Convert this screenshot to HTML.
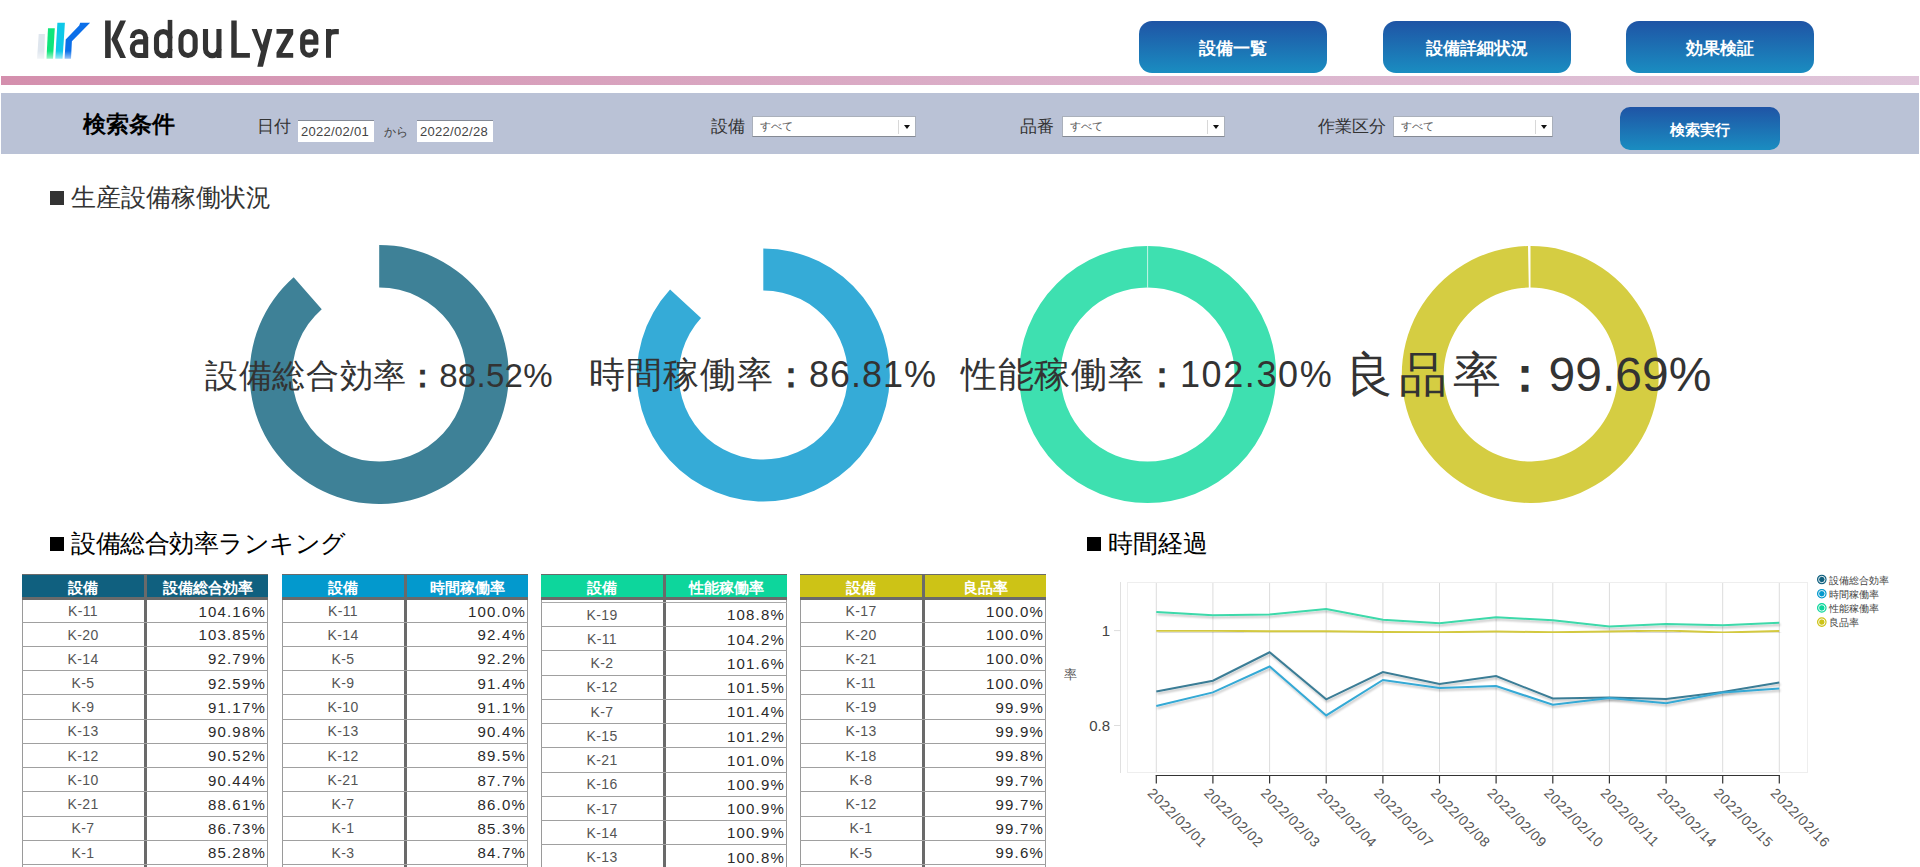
<!DOCTYPE html>
<html><head><meta charset="utf-8"><title>KadouLyzer</title>
<style>
*{box-sizing:border-box;margin:0;padding:0}
html,body{width:1920px;height:867px;overflow:hidden;background:#fff;font-family:"Liberation Sans",sans-serif;}
.a{position:absolute;white-space:nowrap;line-height:1}
.navbtn{position:absolute;top:21px;width:188px;height:52px;border-radius:13px;background:linear-gradient(#1f54a5,#1a8dc1);color:#fff;font-weight:bold;font-size:17px;text-align:center;line-height:56px}
.lbl{position:absolute;font-size:17px;color:#333;line-height:1;white-space:nowrap}
.sel{position:absolute;height:21px;background:#fff;border:1px solid #aab0bb;border-bottom:1.5px solid #858a94}
.sel span{position:absolute;left:7px;top:4.5px;font-size:10.5px;color:#555;line-height:1;letter-spacing:-0.2px}
.sel i{position:absolute;right:16px;top:3px;width:1px;height:14px;background:#d8d8d8}
.sel b{position:absolute;right:5px;top:8px;width:0;height:0;border-left:3.5px solid transparent;border-right:3.5px solid transparent;border-top:4px solid #111}
.date{position:absolute;top:120px;width:76px;height:22px;background:#fff;border-top:1.5px solid #858b97;font-size:13px;color:#444;line-height:1;letter-spacing:0.3px}
.date span{position:absolute;left:3px;top:4px}
.ttl{position:absolute;font-size:25px;line-height:1;white-space:nowrap}
.sq{position:absolute;width:14px;height:14px}
table{position:absolute;border-collapse:collapse;table-layout:fixed}
</style></head><body>

<svg class="a" style="left:0;top:0" width="360" height="75" viewBox="0 0 360 75">
<defs>
<linearGradient id="fadeg" gradientUnits="userSpaceOnUse" x1="0" y1="51" x2="0" y2="59.5"><stop offset="0" stop-color="#fff" stop-opacity="1"/><stop offset="1" stop-color="#fff" stop-opacity="0.35"/></linearGradient>
<mask id="fm" maskUnits="userSpaceOnUse" x="0" y="0" width="100" height="75"><rect x="0" y="0" width="100" height="75" fill="url(#fadeg)"/></mask>
</defs>
<g mask="url(#fm)">
<polygon points="38.7,33.9 44.9,33.9 44.2,58.8 37.1,58.8" fill="#dfe6ee"/>
<polygon points="48,28.2 54.8,28.2 53,58.8 46.5,58.8" fill="#0fe57a"/>
<polygon points="57.4,22.7 64.9,22.7 62.6,58.8 55.3,58.8" fill="#0fc8e8"/>
<polygon points="80.2,22.7 90.1,22.7 71.9,41.2 71,58.8 64.6,58.8 65.7,39.6 79.2,25.6" fill="#0b6fe9"/>
</g>
<g fill="#333">
<rect x="105.1" y="20.5" width="5.6" height="37.5"/>
<polygon points="120.2,20.5 126,20.5 117.4,39.3 126,58 120.2,58 111.2,39.3"/>
<rect x="143.1" y="37" width="5.1" height="21"/>
<polygon points="231.3,20.4 236.7,20.4 236.7,53 249.9,53 249.9,57.8 231.3,57.8"/>
<polygon points="251.6,29 256.9,29 262.3,45 267.2,29 272.4,29 263,66.7 257.3,66.7 260.9,51.5"/>
<polygon points="276.5,29 293.2,29 293.2,34.2 282.3,53 293.2,53 293.2,57.8 276.5,57.8 276.5,52.6 287.4,33.8 276.5,33.8"/>
<rect x="326" y="29" width="5" height="28.8"/>
<rect x="167.7" y="19.9" width="4.6" height="38.1"/>
</g>
<g fill="none" stroke="#333" stroke-width="5.1" stroke-linecap="butt" stroke-linejoin="miter">
<path d="M132.4,37.8 V38.1 A6.6,6.6 0 0 1 145.65,38.1"/>
<path d="M145.65,41.9 H138.4 A6,6.3 0 0 0 132.4,48.2 V49.3 A6,6.3 0 0 0 138.4,55.5 H145.65"/>
<path d="M170,38.35 A6.75,6.75 0 0 0 156.5,38.35 V48.9 A6.75,6.75 0 0 0 170,48.9"/>
<rect x="180.95" y="31.55" width="14.2" height="23.9" rx="7.1"/>
<path d="M205.5,29 V48.9 A6.72,6.72 0 0 0 218.95,48.9"/>
<path d="M218.95,29 V58"/>
<path d="M315.85,49.2 V48.6 A6.6,6.6 0 0 1 302.65,48.6 V38.2 A6.6,6.6 0 0 1 315.85,38.2 V42.1 H302.65"/>
<path d="M328.5,39 C328.5,33 331,31.6 335,31.6 H338.8"/>
</g>
</svg>

<div class="a" style="left:1px;top:76px;width:1918px;height:9px;background:linear-gradient(90deg,#d48fad,#dcb3cc 60%,#dfc5da)"></div>
<div class="navbtn" style="left:1139px">設備一覧</div>
<div class="navbtn" style="left:1383px">設備詳細状況</div>
<div class="navbtn" style="left:1626px">効果検証</div>
<div class="a" style="left:1px;top:93px;width:1918px;height:61px;background:#bac2d6"></div>
<div class="a" style="left:83px;top:112.5px;font-size:23px;font-weight:bold;color:#000">検索条件</div>
<div class="lbl" style="left:257px;top:118px">日付</div>
<div class="date" style="left:298px"><span>2022/02/01</span></div>
<div class="a" style="left:384px;top:126px;font-size:12px;color:#444">から</div>
<div class="date" style="left:417px"><span>2022/02/28</span></div>
<div class="lbl" style="left:711px;top:118px">設備</div>
<div class="sel" style="left:752px;top:115.5px;width:164px"><span>すべて</span><i></i><b></b></div>
<div class="lbl" style="left:1020px;top:118px">品番</div>
<div class="sel" style="left:1062px;top:115.5px;width:163px"><span>すべて</span><i></i><b></b></div>
<div class="lbl" style="left:1318px;top:118px">作業区分</div>
<div class="sel" style="left:1393px;top:115.5px;width:160px"><span>すべて</span><i></i><b></b></div>
<div class="navbtn" style="left:1620px;top:107px;width:160px;height:43px;line-height:45px;font-size:15px;border-radius:10px">検索実行</div>
<div class="sq" style="left:50px;top:191px;background:#333"></div>
<div class="ttl" style="left:71px;top:185px;color:#333">生産設備稼働状況</div>
<svg class="a" style="left:0;top:230px" width="1920" height="290" viewBox="0 230 1920 290">
<path d="M379.20,245.00 A129.5,129.5 0 1 1 293.68,277.25 L321.75,309.17 A87,87 0 1 0 379.20,287.50 Z" fill="#3e8197"/>
<path d="M763.30,248.50 A126.5,126.5 0 1 1 670.06,289.51 L701.02,317.90 A84.5,84.5 0 1 0 763.30,290.50 Z" fill="#35abd7"/>
<circle cx="1147.6" cy="374.5" r="107.75" fill="none" stroke="#3ee0b0" stroke-width="41.5"/>
<line x1="1147.6" y1="246.0" x2="1147.6" y2="287.5" stroke="#fff" stroke-width="1" opacity="0.7"/>
<path d="M1530.50,246.00 A128.5,128.5 0 1 1 1528.00,246.02 L1528.81,287.52 A87,87 0 1 0 1530.50,287.50 Z" fill="#d5cd42"/>
</svg>
<div class="a" style="left:379px;top:374.5px;transform:translate(-50%,-50%);font-size:33px;color:#333;line-height:1"><span style="letter-spacing:0.6px;margin-right:-0.6px">設備総合効率</span><b style="font-weight:bold">：</b><span style="letter-spacing:0.3px">88.52%</span></div>
<div class="a" style="left:763px;top:374.5px;transform:translate(-50%,-50%);font-size:36px;color:#333;line-height:1"><span style="letter-spacing:1.0px;margin-right:-1.0px">時間稼働率</span><b style="font-weight:bold">：</b><span style="letter-spacing:1.0px">86.81%</span></div>
<div class="a" style="left:1147px;top:374.5px;transform:translate(-50%,-50%);font-size:36px;color:#333;line-height:1"><span style="letter-spacing:0.8px;margin-right:-0.8px">性能稼働率</span><b style="font-weight:bold">：</b><span style="letter-spacing:1.6px">102.30%</span></div>
<div class="a" style="left:1528px;top:374.5px;transform:translate(-50%,-50%);font-size:48px;color:#333;line-height:1"><span style="letter-spacing:6px;margin-right:-6px">良品率</span><b style="font-weight:bold">：</b><span style="letter-spacing:0px">99.69%</span></div>
<div class="sq" style="left:50px;top:537px;background:#000"></div>
<div class="ttl" style="left:71px;top:531px;color:#000;letter-spacing:-0.5px">設備総合効率ランキング</div>
<div class="sq" style="left:1087px;top:537px;background:#000"></div>
<div class="ttl" style="left:1108px;top:531px;color:#000">時間経過</div>
<div class="a" style="left:22px;top:574px;width:246px;height:26px;background:#10607f;border-top:1px solid #6a6a6a;border-bottom:3px solid #6a6a6a"></div>
<div class="a" style="left:22px;top:580px;width:122px;text-align:center;font-size:15px;font-weight:bold;color:#fff">設備</div>
<div class="a" style="left:147px;top:580px;width:121px;text-align:center;font-size:15px;font-weight:bold;color:#fff">設備総合効率</div>
<div class="a" style="left:22px;top:600px;width:1px;height:267px;background:#9a9a9a"></div>
<div class="a" style="left:267px;top:600px;width:1px;height:267px;background:#9a9a9a"></div>
<div class="a" style="left:144px;top:575px;width:3px;height:292px;background:#6a6a6a"></div>
<div class="a" style="left:22px;top:622px;width:246px;height:1px;background:#a0a0a0"></div>
<div class="a" style="left:22px;top:604.35px;width:122px;text-align:center;font-size:14px;color:#555;letter-spacing:0.4px">K-11</div>
<div class="a" style="left:147px;top:603.95px;width:119px;text-align:right;font-size:15px;color:#2a2a2a;letter-spacing:1.2px">104.16%</div>
<div class="a" style="left:22px;top:646px;width:246px;height:1px;background:#a0a0a0"></div>
<div class="a" style="left:22px;top:627.61px;width:122px;text-align:center;font-size:14px;color:#555;letter-spacing:0.4px">K-20</div>
<div class="a" style="left:147px;top:627.21px;width:119px;text-align:right;font-size:15px;color:#2a2a2a;letter-spacing:1.2px">103.85%</div>
<div class="a" style="left:22px;top:670px;width:246px;height:1px;background:#a0a0a0"></div>
<div class="a" style="left:22px;top:651.83px;width:122px;text-align:center;font-size:14px;color:#555;letter-spacing:0.4px">K-14</div>
<div class="a" style="left:147px;top:651.43px;width:119px;text-align:right;font-size:15px;color:#2a2a2a;letter-spacing:1.2px">92.79%</div>
<div class="a" style="left:22px;top:694px;width:246px;height:1px;background:#a0a0a0"></div>
<div class="a" style="left:22px;top:676.05px;width:122px;text-align:center;font-size:14px;color:#555;letter-spacing:0.4px">K-5</div>
<div class="a" style="left:147px;top:675.65px;width:119px;text-align:right;font-size:15px;color:#2a2a2a;letter-spacing:1.2px">92.59%</div>
<div class="a" style="left:22px;top:719px;width:246px;height:1px;background:#a0a0a0"></div>
<div class="a" style="left:22px;top:700.27px;width:122px;text-align:center;font-size:14px;color:#555;letter-spacing:0.4px">K-9</div>
<div class="a" style="left:147px;top:699.87px;width:119px;text-align:right;font-size:15px;color:#2a2a2a;letter-spacing:1.2px">91.17%</div>
<div class="a" style="left:22px;top:743px;width:246px;height:1px;background:#a0a0a0"></div>
<div class="a" style="left:22px;top:724.49px;width:122px;text-align:center;font-size:14px;color:#555;letter-spacing:0.4px">K-13</div>
<div class="a" style="left:147px;top:724.09px;width:119px;text-align:right;font-size:15px;color:#2a2a2a;letter-spacing:1.2px">90.98%</div>
<div class="a" style="left:22px;top:767px;width:246px;height:1px;background:#a0a0a0"></div>
<div class="a" style="left:22px;top:748.71px;width:122px;text-align:center;font-size:14px;color:#555;letter-spacing:0.4px">K-12</div>
<div class="a" style="left:147px;top:748.31px;width:119px;text-align:right;font-size:15px;color:#2a2a2a;letter-spacing:1.2px">90.52%</div>
<div class="a" style="left:22px;top:791px;width:246px;height:1px;background:#a0a0a0"></div>
<div class="a" style="left:22px;top:772.93px;width:122px;text-align:center;font-size:14px;color:#555;letter-spacing:0.4px">K-10</div>
<div class="a" style="left:147px;top:772.53px;width:119px;text-align:right;font-size:15px;color:#2a2a2a;letter-spacing:1.2px">90.44%</div>
<div class="a" style="left:22px;top:816px;width:246px;height:1px;background:#a0a0a0"></div>
<div class="a" style="left:22px;top:797.15px;width:122px;text-align:center;font-size:14px;color:#555;letter-spacing:0.4px">K-21</div>
<div class="a" style="left:147px;top:796.75px;width:119px;text-align:right;font-size:15px;color:#2a2a2a;letter-spacing:1.2px">88.61%</div>
<div class="a" style="left:22px;top:840px;width:246px;height:1px;background:#a0a0a0"></div>
<div class="a" style="left:22px;top:821.37px;width:122px;text-align:center;font-size:14px;color:#555;letter-spacing:0.4px">K-7</div>
<div class="a" style="left:147px;top:820.97px;width:119px;text-align:right;font-size:15px;color:#2a2a2a;letter-spacing:1.2px">86.73%</div>
<div class="a" style="left:22px;top:864px;width:246px;height:1px;background:#a0a0a0"></div>
<div class="a" style="left:22px;top:845.59px;width:122px;text-align:center;font-size:14px;color:#555;letter-spacing:0.4px">K-1</div>
<div class="a" style="left:147px;top:845.19px;width:119px;text-align:right;font-size:15px;color:#2a2a2a;letter-spacing:1.2px">85.28%</div>
<div class="a" style="left:282px;top:574px;width:246px;height:26px;background:#0399cd;border-top:1px solid #6a6a6a;border-bottom:3px solid #6a6a6a"></div>
<div class="a" style="left:282px;top:580px;width:122px;text-align:center;font-size:15px;font-weight:bold;color:#fff">設備</div>
<div class="a" style="left:407px;top:580px;width:121px;text-align:center;font-size:15px;font-weight:bold;color:#fff">時間稼働率</div>
<div class="a" style="left:282px;top:600px;width:1px;height:267px;background:#9a9a9a"></div>
<div class="a" style="left:527px;top:600px;width:1px;height:267px;background:#9a9a9a"></div>
<div class="a" style="left:404px;top:575px;width:3px;height:292px;background:#6a6a6a"></div>
<div class="a" style="left:282px;top:622px;width:246px;height:1px;background:#a0a0a0"></div>
<div class="a" style="left:282px;top:604.35px;width:122px;text-align:center;font-size:14px;color:#555;letter-spacing:0.4px">K-11</div>
<div class="a" style="left:407px;top:603.95px;width:119px;text-align:right;font-size:15px;color:#2a2a2a;letter-spacing:1.2px">100.0%</div>
<div class="a" style="left:282px;top:646px;width:246px;height:1px;background:#a0a0a0"></div>
<div class="a" style="left:282px;top:627.61px;width:122px;text-align:center;font-size:14px;color:#555;letter-spacing:0.4px">K-14</div>
<div class="a" style="left:407px;top:627.21px;width:119px;text-align:right;font-size:15px;color:#2a2a2a;letter-spacing:1.2px">92.4%</div>
<div class="a" style="left:282px;top:670px;width:246px;height:1px;background:#a0a0a0"></div>
<div class="a" style="left:282px;top:651.83px;width:122px;text-align:center;font-size:14px;color:#555;letter-spacing:0.4px">K-5</div>
<div class="a" style="left:407px;top:651.43px;width:119px;text-align:right;font-size:15px;color:#2a2a2a;letter-spacing:1.2px">92.2%</div>
<div class="a" style="left:282px;top:694px;width:246px;height:1px;background:#a0a0a0"></div>
<div class="a" style="left:282px;top:676.05px;width:122px;text-align:center;font-size:14px;color:#555;letter-spacing:0.4px">K-9</div>
<div class="a" style="left:407px;top:675.65px;width:119px;text-align:right;font-size:15px;color:#2a2a2a;letter-spacing:1.2px">91.4%</div>
<div class="a" style="left:282px;top:719px;width:246px;height:1px;background:#a0a0a0"></div>
<div class="a" style="left:282px;top:700.27px;width:122px;text-align:center;font-size:14px;color:#555;letter-spacing:0.4px">K-10</div>
<div class="a" style="left:407px;top:699.87px;width:119px;text-align:right;font-size:15px;color:#2a2a2a;letter-spacing:1.2px">91.1%</div>
<div class="a" style="left:282px;top:743px;width:246px;height:1px;background:#a0a0a0"></div>
<div class="a" style="left:282px;top:724.49px;width:122px;text-align:center;font-size:14px;color:#555;letter-spacing:0.4px">K-13</div>
<div class="a" style="left:407px;top:724.09px;width:119px;text-align:right;font-size:15px;color:#2a2a2a;letter-spacing:1.2px">90.4%</div>
<div class="a" style="left:282px;top:767px;width:246px;height:1px;background:#a0a0a0"></div>
<div class="a" style="left:282px;top:748.71px;width:122px;text-align:center;font-size:14px;color:#555;letter-spacing:0.4px">K-12</div>
<div class="a" style="left:407px;top:748.31px;width:119px;text-align:right;font-size:15px;color:#2a2a2a;letter-spacing:1.2px">89.5%</div>
<div class="a" style="left:282px;top:791px;width:246px;height:1px;background:#a0a0a0"></div>
<div class="a" style="left:282px;top:772.93px;width:122px;text-align:center;font-size:14px;color:#555;letter-spacing:0.4px">K-21</div>
<div class="a" style="left:407px;top:772.53px;width:119px;text-align:right;font-size:15px;color:#2a2a2a;letter-spacing:1.2px">87.7%</div>
<div class="a" style="left:282px;top:816px;width:246px;height:1px;background:#a0a0a0"></div>
<div class="a" style="left:282px;top:797.15px;width:122px;text-align:center;font-size:14px;color:#555;letter-spacing:0.4px">K-7</div>
<div class="a" style="left:407px;top:796.75px;width:119px;text-align:right;font-size:15px;color:#2a2a2a;letter-spacing:1.2px">86.0%</div>
<div class="a" style="left:282px;top:840px;width:246px;height:1px;background:#a0a0a0"></div>
<div class="a" style="left:282px;top:821.37px;width:122px;text-align:center;font-size:14px;color:#555;letter-spacing:0.4px">K-1</div>
<div class="a" style="left:407px;top:820.97px;width:119px;text-align:right;font-size:15px;color:#2a2a2a;letter-spacing:1.2px">85.3%</div>
<div class="a" style="left:282px;top:864px;width:246px;height:1px;background:#a0a0a0"></div>
<div class="a" style="left:282px;top:845.59px;width:122px;text-align:center;font-size:14px;color:#555;letter-spacing:0.4px">K-3</div>
<div class="a" style="left:407px;top:845.19px;width:119px;text-align:right;font-size:15px;color:#2a2a2a;letter-spacing:1.2px">84.7%</div>
<div class="a" style="left:541px;top:574px;width:246px;height:26px;background:#0dd69c;border-top:1px solid #6a6a6a;border-bottom:3px solid #6a6a6a"></div>
<div class="a" style="left:541px;top:580px;width:122px;text-align:center;font-size:15px;font-weight:bold;color:#fff">設備</div>
<div class="a" style="left:666px;top:580px;width:121px;text-align:center;font-size:15px;font-weight:bold;color:#fff">性能稼働率</div>
<div class="a" style="left:541px;top:600px;width:1px;height:267px;background:#9a9a9a"></div>
<div class="a" style="left:786px;top:600px;width:1px;height:267px;background:#9a9a9a"></div>
<div class="a" style="left:663px;top:575px;width:3px;height:292px;background:#6a6a6a"></div>
<div class="a" style="left:541px;top:601.5px;width:246px;height:1.5px;background:#aaa"></div>
<div class="a" style="left:541px;top:626px;width:246px;height:1px;background:#a0a0a0"></div>
<div class="a" style="left:541px;top:607.81px;width:122px;text-align:center;font-size:14px;color:#555;letter-spacing:0.4px">K-19</div>
<div class="a" style="left:666px;top:607.41px;width:119px;text-align:right;font-size:15px;color:#2a2a2a;letter-spacing:1.2px">108.8%</div>
<div class="a" style="left:541px;top:650px;width:246px;height:1px;background:#a0a0a0"></div>
<div class="a" style="left:541px;top:632.03px;width:122px;text-align:center;font-size:14px;color:#555;letter-spacing:0.4px">K-11</div>
<div class="a" style="left:666px;top:631.63px;width:119px;text-align:right;font-size:15px;color:#2a2a2a;letter-spacing:1.2px">104.2%</div>
<div class="a" style="left:541px;top:675px;width:246px;height:1px;background:#a0a0a0"></div>
<div class="a" style="left:541px;top:656.25px;width:122px;text-align:center;font-size:14px;color:#555;letter-spacing:0.4px">K-2</div>
<div class="a" style="left:666px;top:655.85px;width:119px;text-align:right;font-size:15px;color:#2a2a2a;letter-spacing:1.2px">101.6%</div>
<div class="a" style="left:541px;top:699px;width:246px;height:1px;background:#a0a0a0"></div>
<div class="a" style="left:541px;top:680.47px;width:122px;text-align:center;font-size:14px;color:#555;letter-spacing:0.4px">K-12</div>
<div class="a" style="left:666px;top:680.07px;width:119px;text-align:right;font-size:15px;color:#2a2a2a;letter-spacing:1.2px">101.5%</div>
<div class="a" style="left:541px;top:723px;width:246px;height:1px;background:#a0a0a0"></div>
<div class="a" style="left:541px;top:704.69px;width:122px;text-align:center;font-size:14px;color:#555;letter-spacing:0.4px">K-7</div>
<div class="a" style="left:666px;top:704.29px;width:119px;text-align:right;font-size:15px;color:#2a2a2a;letter-spacing:1.2px">101.4%</div>
<div class="a" style="left:541px;top:747px;width:246px;height:1px;background:#a0a0a0"></div>
<div class="a" style="left:541px;top:728.91px;width:122px;text-align:center;font-size:14px;color:#555;letter-spacing:0.4px">K-15</div>
<div class="a" style="left:666px;top:728.51px;width:119px;text-align:right;font-size:15px;color:#2a2a2a;letter-spacing:1.2px">101.2%</div>
<div class="a" style="left:541px;top:772px;width:246px;height:1px;background:#a0a0a0"></div>
<div class="a" style="left:541px;top:753.13px;width:122px;text-align:center;font-size:14px;color:#555;letter-spacing:0.4px">K-21</div>
<div class="a" style="left:666px;top:752.73px;width:119px;text-align:right;font-size:15px;color:#2a2a2a;letter-spacing:1.2px">101.0%</div>
<div class="a" style="left:541px;top:796px;width:246px;height:1px;background:#a0a0a0"></div>
<div class="a" style="left:541px;top:777.35px;width:122px;text-align:center;font-size:14px;color:#555;letter-spacing:0.4px">K-16</div>
<div class="a" style="left:666px;top:776.95px;width:119px;text-align:right;font-size:15px;color:#2a2a2a;letter-spacing:1.2px">100.9%</div>
<div class="a" style="left:541px;top:820px;width:246px;height:1px;background:#a0a0a0"></div>
<div class="a" style="left:541px;top:801.57px;width:122px;text-align:center;font-size:14px;color:#555;letter-spacing:0.4px">K-17</div>
<div class="a" style="left:666px;top:801.17px;width:119px;text-align:right;font-size:15px;color:#2a2a2a;letter-spacing:1.2px">100.9%</div>
<div class="a" style="left:541px;top:844px;width:246px;height:1px;background:#a0a0a0"></div>
<div class="a" style="left:541px;top:825.79px;width:122px;text-align:center;font-size:14px;color:#555;letter-spacing:0.4px">K-14</div>
<div class="a" style="left:666px;top:825.39px;width:119px;text-align:right;font-size:15px;color:#2a2a2a;letter-spacing:1.2px">100.9%</div>
<div class="a" style="left:541px;top:868px;width:246px;height:1px;background:#a0a0a0"></div>
<div class="a" style="left:541px;top:850.01px;width:122px;text-align:center;font-size:14px;color:#555;letter-spacing:0.4px">K-13</div>
<div class="a" style="left:666px;top:849.61px;width:119px;text-align:right;font-size:15px;color:#2a2a2a;letter-spacing:1.2px">100.8%</div>
<div class="a" style="left:800px;top:574px;width:246px;height:26px;background:#cdc316;border-top:1px solid #6a6a6a;border-bottom:3px solid #6a6a6a"></div>
<div class="a" style="left:800px;top:580px;width:122px;text-align:center;font-size:15px;font-weight:bold;color:#fff">設備</div>
<div class="a" style="left:925px;top:580px;width:121px;text-align:center;font-size:15px;font-weight:bold;color:#fff">良品率</div>
<div class="a" style="left:800px;top:600px;width:1px;height:267px;background:#9a9a9a"></div>
<div class="a" style="left:1045px;top:600px;width:1px;height:267px;background:#9a9a9a"></div>
<div class="a" style="left:922px;top:575px;width:3px;height:292px;background:#6a6a6a"></div>
<div class="a" style="left:800px;top:622px;width:246px;height:1px;background:#a0a0a0"></div>
<div class="a" style="left:800px;top:604.35px;width:122px;text-align:center;font-size:14px;color:#555;letter-spacing:0.4px">K-17</div>
<div class="a" style="left:925px;top:603.95px;width:119px;text-align:right;font-size:15px;color:#2a2a2a;letter-spacing:1.2px">100.0%</div>
<div class="a" style="left:800px;top:646px;width:246px;height:1px;background:#a0a0a0"></div>
<div class="a" style="left:800px;top:627.61px;width:122px;text-align:center;font-size:14px;color:#555;letter-spacing:0.4px">K-20</div>
<div class="a" style="left:925px;top:627.21px;width:119px;text-align:right;font-size:15px;color:#2a2a2a;letter-spacing:1.2px">100.0%</div>
<div class="a" style="left:800px;top:670px;width:246px;height:1px;background:#a0a0a0"></div>
<div class="a" style="left:800px;top:651.83px;width:122px;text-align:center;font-size:14px;color:#555;letter-spacing:0.4px">K-21</div>
<div class="a" style="left:925px;top:651.43px;width:119px;text-align:right;font-size:15px;color:#2a2a2a;letter-spacing:1.2px">100.0%</div>
<div class="a" style="left:800px;top:694px;width:246px;height:1px;background:#a0a0a0"></div>
<div class="a" style="left:800px;top:676.05px;width:122px;text-align:center;font-size:14px;color:#555;letter-spacing:0.4px">K-11</div>
<div class="a" style="left:925px;top:675.65px;width:119px;text-align:right;font-size:15px;color:#2a2a2a;letter-spacing:1.2px">100.0%</div>
<div class="a" style="left:800px;top:719px;width:246px;height:1px;background:#a0a0a0"></div>
<div class="a" style="left:800px;top:700.27px;width:122px;text-align:center;font-size:14px;color:#555;letter-spacing:0.4px">K-19</div>
<div class="a" style="left:925px;top:699.87px;width:119px;text-align:right;font-size:15px;color:#2a2a2a;letter-spacing:1.2px">99.9%</div>
<div class="a" style="left:800px;top:743px;width:246px;height:1px;background:#a0a0a0"></div>
<div class="a" style="left:800px;top:724.49px;width:122px;text-align:center;font-size:14px;color:#555;letter-spacing:0.4px">K-13</div>
<div class="a" style="left:925px;top:724.09px;width:119px;text-align:right;font-size:15px;color:#2a2a2a;letter-spacing:1.2px">99.9%</div>
<div class="a" style="left:800px;top:767px;width:246px;height:1px;background:#a0a0a0"></div>
<div class="a" style="left:800px;top:748.71px;width:122px;text-align:center;font-size:14px;color:#555;letter-spacing:0.4px">K-18</div>
<div class="a" style="left:925px;top:748.31px;width:119px;text-align:right;font-size:15px;color:#2a2a2a;letter-spacing:1.2px">99.8%</div>
<div class="a" style="left:800px;top:791px;width:246px;height:1px;background:#a0a0a0"></div>
<div class="a" style="left:800px;top:772.93px;width:122px;text-align:center;font-size:14px;color:#555;letter-spacing:0.4px">K-8</div>
<div class="a" style="left:925px;top:772.53px;width:119px;text-align:right;font-size:15px;color:#2a2a2a;letter-spacing:1.2px">99.7%</div>
<div class="a" style="left:800px;top:816px;width:246px;height:1px;background:#a0a0a0"></div>
<div class="a" style="left:800px;top:797.15px;width:122px;text-align:center;font-size:14px;color:#555;letter-spacing:0.4px">K-12</div>
<div class="a" style="left:925px;top:796.75px;width:119px;text-align:right;font-size:15px;color:#2a2a2a;letter-spacing:1.2px">99.7%</div>
<div class="a" style="left:800px;top:840px;width:246px;height:1px;background:#a0a0a0"></div>
<div class="a" style="left:800px;top:821.37px;width:122px;text-align:center;font-size:14px;color:#555;letter-spacing:0.4px">K-1</div>
<div class="a" style="left:925px;top:820.97px;width:119px;text-align:right;font-size:15px;color:#2a2a2a;letter-spacing:1.2px">99.7%</div>
<div class="a" style="left:800px;top:864px;width:246px;height:1px;background:#a0a0a0"></div>
<div class="a" style="left:800px;top:845.59px;width:122px;text-align:center;font-size:14px;color:#555;letter-spacing:0.4px">K-5</div>
<div class="a" style="left:925px;top:845.19px;width:119px;text-align:right;font-size:15px;color:#2a2a2a;letter-spacing:1.2px">99.6%</div>
<svg class="a" style="left:1040px;top:560px" width="880" height="307" viewBox="1040 560 880 307">
<defs><filter id="sh" x="-5%" y="-20%" width="110%" height="140%"><feGaussianBlur in="SourceAlpha" stdDeviation="1"/><feOffset dx="1" dy="2"/><feComponentTransfer><feFuncA type="linear" slope="0.25"/></feComponentTransfer><feMerge><feMergeNode/><feMergeNode in="SourceGraphic"/></feMerge></filter></defs>
<rect x="1127.5" y="582.5" width="680" height="190" fill="none" stroke="#eeeeee" stroke-width="1"/>
<line x1="1120.5" y1="582" x2="1120.5" y2="773" stroke="#e0e0e0" stroke-width="1"/>
<line x1="1114" y1="630.6" x2="1121" y2="630.6" stroke="#ddd" stroke-width="1"/>
<text x="1110" y="635.6" text-anchor="end" font-family="Liberation Sans" font-size="15" fill="#444">1</text>
<line x1="1114" y1="725.5" x2="1121" y2="725.5" stroke="#ddd" stroke-width="1"/>
<text x="1110" y="730.5" text-anchor="end" font-family="Liberation Sans" font-size="15" fill="#444">0.8</text>
<text x="1070" y="679" text-anchor="middle" font-family="Liberation Sans" font-size="13" fill="#555">率</text>
<line x1="1156.3" y1="583" x2="1156.3" y2="772" stroke="#dcdcdc" stroke-width="1"/>
<line x1="1212.9" y1="583" x2="1212.9" y2="772" stroke="#dcdcdc" stroke-width="1"/>
<line x1="1269.6" y1="583" x2="1269.6" y2="772" stroke="#dcdcdc" stroke-width="1"/>
<line x1="1326.2" y1="583" x2="1326.2" y2="772" stroke="#dcdcdc" stroke-width="1"/>
<line x1="1382.9" y1="583" x2="1382.9" y2="772" stroke="#dcdcdc" stroke-width="1"/>
<line x1="1439.5" y1="583" x2="1439.5" y2="772" stroke="#dcdcdc" stroke-width="1"/>
<line x1="1496.1" y1="583" x2="1496.1" y2="772" stroke="#dcdcdc" stroke-width="1"/>
<line x1="1552.8" y1="583" x2="1552.8" y2="772" stroke="#dcdcdc" stroke-width="1"/>
<line x1="1609.4" y1="583" x2="1609.4" y2="772" stroke="#dcdcdc" stroke-width="1"/>
<line x1="1666.1" y1="583" x2="1666.1" y2="772" stroke="#dcdcdc" stroke-width="1"/>
<line x1="1722.7" y1="583" x2="1722.7" y2="772" stroke="#dcdcdc" stroke-width="1"/>
<line x1="1779.3" y1="583" x2="1779.3" y2="772" stroke="#dcdcdc" stroke-width="1"/>
<line x1="1155.8" y1="775.5" x2="1779.8" y2="775.5" stroke="#333" stroke-width="1"/>
<line x1="1156.3" y1="775" x2="1156.3" y2="783.5" stroke="#333" stroke-width="1.2"/>
<line x1="1212.9" y1="775" x2="1212.9" y2="783.5" stroke="#333" stroke-width="1.2"/>
<line x1="1269.6" y1="775" x2="1269.6" y2="783.5" stroke="#333" stroke-width="1.2"/>
<line x1="1326.2" y1="775" x2="1326.2" y2="783.5" stroke="#333" stroke-width="1.2"/>
<line x1="1382.9" y1="775" x2="1382.9" y2="783.5" stroke="#333" stroke-width="1.2"/>
<line x1="1439.5" y1="775" x2="1439.5" y2="783.5" stroke="#333" stroke-width="1.2"/>
<line x1="1496.1" y1="775" x2="1496.1" y2="783.5" stroke="#333" stroke-width="1.2"/>
<line x1="1552.8" y1="775" x2="1552.8" y2="783.5" stroke="#333" stroke-width="1.2"/>
<line x1="1609.4" y1="775" x2="1609.4" y2="783.5" stroke="#333" stroke-width="1.2"/>
<line x1="1666.1" y1="775" x2="1666.1" y2="783.5" stroke="#333" stroke-width="1.2"/>
<line x1="1722.7" y1="775" x2="1722.7" y2="783.5" stroke="#333" stroke-width="1.2"/>
<line x1="1779.3" y1="775" x2="1779.3" y2="783.5" stroke="#333" stroke-width="1.2"/>
<text transform="translate(1146.7,794) rotate(45)" font-family="Liberation Sans" font-size="14" letter-spacing="0.7" fill="#555">2022/02/01</text>
<text transform="translate(1203.3,794) rotate(45)" font-family="Liberation Sans" font-size="14" letter-spacing="0.7" fill="#555">2022/02/02</text>
<text transform="translate(1260.0,794) rotate(45)" font-family="Liberation Sans" font-size="14" letter-spacing="0.7" fill="#555">2022/02/03</text>
<text transform="translate(1316.6,794) rotate(45)" font-family="Liberation Sans" font-size="14" letter-spacing="0.7" fill="#555">2022/02/04</text>
<text transform="translate(1373.3,794) rotate(45)" font-family="Liberation Sans" font-size="14" letter-spacing="0.7" fill="#555">2022/02/07</text>
<text transform="translate(1429.9,794) rotate(45)" font-family="Liberation Sans" font-size="14" letter-spacing="0.7" fill="#555">2022/02/08</text>
<text transform="translate(1486.5,794) rotate(45)" font-family="Liberation Sans" font-size="14" letter-spacing="0.7" fill="#555">2022/02/09</text>
<text transform="translate(1543.2,794) rotate(45)" font-family="Liberation Sans" font-size="14" letter-spacing="0.7" fill="#555">2022/02/10</text>
<text transform="translate(1599.8,794) rotate(45)" font-family="Liberation Sans" font-size="14" letter-spacing="0.7" fill="#555">2022/02/11</text>
<text transform="translate(1656.5,794) rotate(45)" font-family="Liberation Sans" font-size="14" letter-spacing="0.7" fill="#555">2022/02/14</text>
<text transform="translate(1713.1,794) rotate(45)" font-family="Liberation Sans" font-size="14" letter-spacing="0.7" fill="#555">2022/02/15</text>
<text transform="translate(1769.7,794) rotate(45)" font-family="Liberation Sans" font-size="14" letter-spacing="0.7" fill="#555">2022/02/16</text>
<polyline points="1156.3,630.7 1212.9,630.7 1269.6,631.3 1326.2,631.3 1382.9,632.0 1439.5,632.2 1496.1,631.6 1552.8,632.2 1609.4,631.6 1666.1,630.6 1722.7,632.6 1779.3,631.0" fill="none" stroke="#d3c940" stroke-width="2" filter="url(#sh)"/>
<polyline points="1156.3,612.1 1212.9,615.3 1269.6,614.4 1326.2,609.1 1382.9,619.7 1439.5,623.2 1496.1,617.3 1552.8,620.3 1609.4,626.6 1666.1,624.0 1722.7,625.2 1779.3,622.7" fill="none" stroke="#3ed9aa" stroke-width="2" filter="url(#sh)"/>
<polyline points="1156.3,691.5 1212.9,680.7 1269.6,652.3 1326.2,699.3 1382.9,672.0 1439.5,684.0 1496.1,676.1 1552.8,698.5 1609.4,697.5 1666.1,698.9 1722.7,692.0 1779.3,682.6" fill="none" stroke="#3b7d96" stroke-width="2" filter="url(#sh)"/>
<polyline points="1156.3,706.0 1212.9,692.4 1269.6,666.5 1326.2,715.4 1382.9,680.0 1439.5,688.0 1496.1,686.0 1552.8,704.8 1609.4,697.9 1666.1,703.2 1722.7,692.5 1779.3,688.6" fill="none" stroke="#34a9d5" stroke-width="2" filter="url(#sh)"/>
<circle cx="1821.8" cy="579.5" r="4.2" fill="#10607f" stroke="#10607f" stroke-width="1.2"/><circle cx="1821.8" cy="579.5" r="3.2" fill="none" stroke="#fff" stroke-width="0.9"/>
<text x="1828.5" y="583.5" font-family="Liberation Sans" font-size="10" fill="#444">設備総合効率</text>
<circle cx="1821.8" cy="593.7" r="4.2" fill="#0399cd" stroke="#0399cd" stroke-width="1.2"/><circle cx="1821.8" cy="593.7" r="3.2" fill="none" stroke="#fff" stroke-width="0.9"/>
<text x="1828.5" y="597.7" font-family="Liberation Sans" font-size="10" fill="#444">時間稼働率</text>
<circle cx="1821.8" cy="607.9" r="4.2" fill="#0dd69c" stroke="#0dd69c" stroke-width="1.2"/><circle cx="1821.8" cy="607.9" r="3.2" fill="none" stroke="#fff" stroke-width="0.9"/>
<text x="1828.5" y="611.9" font-family="Liberation Sans" font-size="10" fill="#444">性能稼働率</text>
<circle cx="1821.8" cy="622.1" r="4.2" fill="#cdc316" stroke="#cdc316" stroke-width="1.2"/><circle cx="1821.8" cy="622.1" r="3.2" fill="none" stroke="#fff" stroke-width="0.9"/>
<text x="1828.5" y="626.1" font-family="Liberation Sans" font-size="10" fill="#444">良品率</text>
</svg>
</body></html>
